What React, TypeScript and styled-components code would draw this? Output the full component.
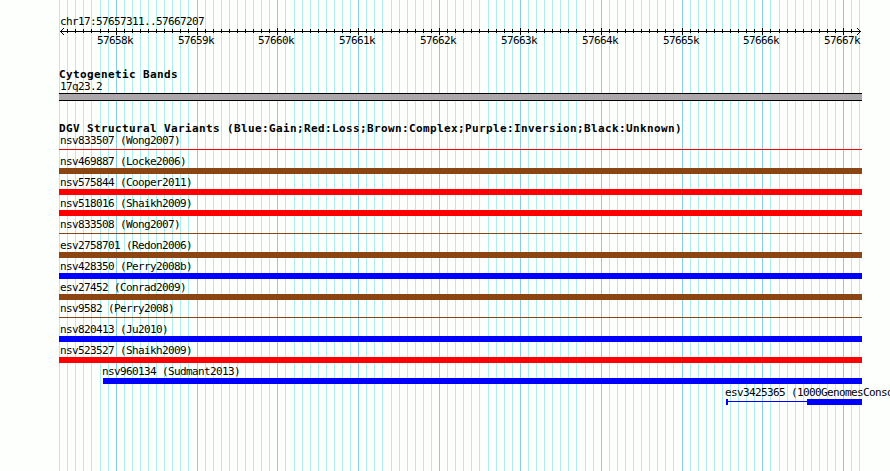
import React from "react";
import styled, { createGlobalStyle } from "styled-components";

const START = 57657311;
const END = 57667207;
const PX_PER_BASE = 800 / (END - START + 1);
const toX = (pos: number) => Math.round((pos - START) * PX_PER_BASE + 60);

const COLORS = { red: "#ff0000", brown: "#8b4513", blue: "#0000ff" };

const ticks: { x: number; major: boolean; label: string }[] = [];
for (let pos = 57657300; pos <= 57667200; pos += 100) {
  ticks.push({ x: toX(pos), major: pos % 1000 === 0, label: `${pos / 1000}k` });
}
const majors = ticks.filter((t) => t.major);

const GlobalStyle = createGlobalStyle`
  body { margin: 0; background: #fdfffc; }
`;

const Page = styled.main`
  position: relative;
  width: 890px;
  height: 471px;
  overflow: hidden;
  background: #fdfffc;
  color: #000;
`;

const Grid = styled.svg`
  position: absolute;
  inset: 0;
  display: block;
`;

const Content = styled.div`
  position: relative;
  display: flex;
  flex-direction: column;
  padding: 15px 0 0 59px;
`;

const Text = styled.div`
  height: 13px;
  padding-left: 1px;
  font: 11px/13px "DejaVu Sans Mono", monospace;
  letter-spacing: -0.622px;
  white-space: pre;
`;

const Heading = styled.h2`
  margin: 0;
  height: 12px;
  font: bold 11px/14px "DejaVu Sans Mono", monospace;
  letter-spacing: 0.378px;
  white-space: pre;
`;

const Ruler = styled.div`
  height: 20px;
  width: 803px;
`;

const Axis = styled.svg`
  display: block;
`;

const AxisLabels = styled.div`
  position: relative;
  height: 13px;
  margin-top: -1px;
`;

const AxisLabel = styled(Text)<{ $x: number }>`
  position: absolute;
  left: ${(p) => p.$x - 59 - 20}px;
  top: 0;
`;

const Section = styled.section<{ $gap: number }>`
  margin-top: ${(p) => p.$gap}px;
`;

const Band = styled.div`
  box-sizing: border-box;
  width: 803px;
  height: 8px;
  border: solid #000;
  border-width: 1px 0;
  background: #aba7ab;
`;

const Row = styled.div<{ $indent: number }>`
  height: 21px;
  width: ${(p) => 803 - p.$indent}px;
  margin-left: ${(p) => p.$indent}px;
`;

const RowLabel = styled(Text)<{ $shift: boolean }>`
  margin-left: ${(p) => (p.$shift ? -2 : 0)}px;
`;

const Track = styled.div`
  display: flex;
  align-items: flex-start;
  height: 6px;
`;

const Bar = styled.div<{ $color: string; $width?: number; $thin?: boolean }>`
  flex: ${(p) => (p.$width ? `0 0 ${p.$width}px` : "1")};
  height: ${(p) => (p.$thin ? 1 : 6)}px;
  margin-top: ${(p) => (p.$thin ? 2 : 0)}px;
  background: ${(p) => p.$color};
`;

type Segment = { width?: number; thin?: boolean };
type Variant = { label: string; color: string; indent?: number; segments?: Segment[] };

const solid: Segment[] = [{}];
const hairline: Segment[] = [{ thin: true }];

const variants: Variant[] = [
  { label: "nsv833507 (Wong2007)", color: COLORS.red, segments: hairline },
  { label: "nsv469887 (Locke2006)", color: COLORS.brown },
  { label: "nsv575844 (Cooper2011)", color: COLORS.red },
  { label: "nsv518016 (Shaikh2009)", color: COLORS.red },
  { label: "nsv833508 (Wong2007)", color: COLORS.brown, segments: hairline },
  { label: "esv2758701 (Redon2006)", color: COLORS.brown },
  { label: "nsv428350 (Perry2008b)", color: COLORS.blue },
  { label: "esv27452 (Conrad2009)", color: COLORS.brown },
  { label: "nsv9582 (Perry2008)", color: COLORS.brown, segments: hairline },
  { label: "nsv820413 (Ju2010)", color: COLORS.blue },
  { label: "nsv523527 (Shaikh2009)", color: COLORS.red },
  { label: "nsv960134 (Sudmant2013)", color: COLORS.blue, indent: 44 },
  {
    label: "esv3425365 (1000GenomesConso",
    color: COLORS.blue,
    indent: 667,
    segments: [{ width: 2 }, { width: 79, thin: true }, {}],
  },
];

export default function App() {
  return (
    <>
      <GlobalStyle />
      <Page>
        <Grid width="890" height="471" shapeRendering="crispEdges">
          {ticks.map((t) => (
            <rect key={t.x} x={t.x} y="0" width="1" height="471" fill={t.major ? "#87ceeb" : "#afeeee"} />
          ))}
        </Grid>
        <Content>
          <Text>{`chr17:${START}..${END}`}</Text>
          <Ruler>
            <Axis width="803" height="7" viewBox="59 28 803 7" shapeRendering="crispEdges">
              <rect x="60" y="31" width="801" height="1" />
              {ticks.slice(1, -1).map((t) => (
                <rect key={t.x} x={t.x} y={t.major ? 28 : 29} width="1" height={t.major ? 7 : 4} />
              ))}
              <path d="M61 30h1v3h-1zM62 29h1v1h-1zM62 33h1v1h-1zM63 28h1v1h-1zM63 34h1v1h-1z" />
              <path d="M859 30h1v3h-1zM858 29h1v1h-1zM858 33h1v1h-1zM857 28h1v1h-1zM857 34h1v1h-1z" />
            </Axis>
            <AxisLabels>
              {majors.map((t) => (
                <AxisLabel key={t.x} $x={t.x}>{t.label}</AxisLabel>
              ))}
            </AxisLabels>
          </Ruler>
          <Section $gap={20}>
            <Heading>Cytogenetic Bands</Heading>
            <Text>17q23.2</Text>
            <Band />
          </Section>
          <Section $gap={21}>
            <Heading>DGV Structural Variants (Blue:Gain;Red:Loss;Brown:Complex;Purple:Inversion;Black:Unknown)</Heading>
            {variants.map((v) => (
              <Row key={v.label} $indent={v.indent ?? 0}>
                <RowLabel $shift={!!v.indent}>{v.label}</RowLabel>
                <Track>
                  {(v.segments ?? solid).map((s, i) => (
                    <Bar key={i} $color={v.color} $width={s.width} $thin={s.thin} />
                  ))}
                </Track>
              </Row>
            ))}
          </Section>
        </Content>
      </Page>
    </>
  );
}
